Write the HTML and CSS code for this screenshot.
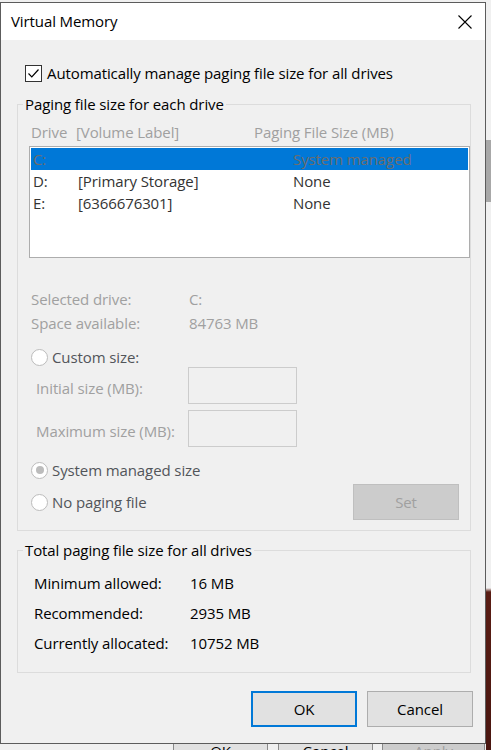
FILE: index.html
```html
<!DOCTYPE html>
<html>
<head>
<meta charset="utf-8">
<title>Virtual Memory</title>
<link rel="stylesheet" href="styles.css">
</head>
<body>
<div class="screen">
  <div class="bg-top"></div>
  <div class="dialog">
    <div class="titlebar">
      <span class="title">Virtual Memory</span>
      <svg class="close" width="14" height="14" viewBox="0 0 14 14"><path d="M0.5 0.5 L13.5 13.5 M13.5 0.5 L0.5 13.5" stroke="#000" stroke-width="1.1" fill="none"/></svg>
    </div>
    <div class="content">
      <div class="auto-row">
        <span class="checkbox"><svg width="15" height="15" viewBox="0 0 15 15"><path d="M2.5 7.5 L5.8 10.8 L12.5 3.5" stroke="#000" stroke-width="1.2" fill="none"/></svg></span>
        <span class="auto-label">Automatically manage paging file size for all drives</span>
      </div>

      <fieldset class="group group-drives">
        <legend>Paging file size for each drive</legend>
        <div class="list-head">
          <span>Drive</span><span>[Volume Label]</span><span>Paging File Size (MB)</span>
        </div>
        <div class="listbox">
          <div class="lrow selected"><span>C:</span><span></span><span>System managed</span></div>
          <div class="lrow"><span>D:</span><span>[Primary Storage]</span><span>None</span></div>
          <div class="lrow"><span>E:</span><span>[6366676301]</span><span>None</span></div>
        </div>
        <div class="info-row first"><span>Selected drive:</span><span>C:</span></div>
        <div class="info-row"><span>Space available:</span><span>84763 MB</span></div>

        <div class="radio-row custom"><span class="radio"></span><span class="radio-label">Custom size:</span></div>
        <div class="size-row"><span class="size-label">Initial size (MB):</span><span class="size-box"></span></div>
        <div class="size-row second"><span class="size-label">Maximum size (MB):</span><span class="size-box"></span></div>
        <div class="radio-row sysman"><span class="radio checked"></span><span class="radio-label">System managed size</span></div>
        <div class="radio-row nopage">
          <span class="radio"></span><span class="radio-label">No paging file</span>
          <span class="btn btn-set">Set</span>
        </div>
      </fieldset>

      <fieldset class="group group-total">
        <legend>Total paging file size for all drives</legend>
        <div class="total-row first"><span>Minimum allowed:</span><span>16 MB</span></div>
        <div class="total-row"><span>Recommended:</span><span>2935 MB</span></div>
        <div class="total-row"><span>Currently allocated:</span><span>10752 MB</span></div>
      </fieldset>

      <div class="actions">
        <span class="btn btn-ok">OK</span>
        <span class="btn btn-cancel">Cancel</span>
      </div>
    </div>
  </div>
  <div class="bg-right"></div>
  <div class="bg-bottom">
    <span class="bb-btn bb-ok">OK</span>
    <span class="bb-btn bb-cancel">Cancel</span>
    <span class="bb-btn bb-apply">Apply</span>
  </div>
</div>
</body>
</html>
```

FILE: styles.css
```css
html, body {
  margin: 0;
  padding: 0;
}
body {
  width: 491px;
  height: 750px;
  overflow: hidden;
  background: #f0f0f0;
  font-family: "Segoe UI", "Open Sans", "Noto Sans", sans-serif;
  font-size: 15px;
  letter-spacing: -0.1px;
  color: #000;
}
.screen {
  display: grid;
  grid-template-columns: 486px 5px;
  grid-template-rows: 2px 742px 6px;
  width: 491px;
  height: 750px;
  overflow: hidden;
}
.bg-top {
  grid-column: 1 / 3;
  grid-row: 1;
  background: #f0f0f0;
}
.dialog {
  grid-column: 1;
  grid-row: 2;
  box-sizing: border-box;
  border: 1px solid #5c5c5c;
  background: #f0f0f0;
  display: flex;
  flex-direction: column;
  overflow: hidden;
}
.titlebar {
  height: 37px;
  flex: none;
  background: #fff;
  display: flex;
  align-items: center;
  padding-left: 10px;
}
.title {
  font-size: 15px;
  line-height: 20px;
  margin-top: -2px;
  color: #000;
}
.close {
  margin-left: auto;
  margin-right: 13px;
}
.content {
  padding: 0 12px 0 16px;
}
.auto-row {
  margin-top: 25px;
  height: 17px;
  display: flex;
  align-items: center;
  padding-left: 8px;
}
.checkbox {
  box-sizing: border-box;
  width: 17px;
  height: 17px;
  border: 1px solid #333;
  background: #fff;
  display: flex;
  align-items: center;
  justify-content: center;
  flex: none;
}
.auto-label {
  margin-left: 5px;
  line-height: 17px;
}
.group {
  margin: 12px 2px 0 0;
  padding: 0 0 10px 0;
  border: 1px solid #dcdcdc;
  min-width: 0;
}
.group legend {
  margin-left: 5px;
  padding: 0 2px;
  line-height: 20px;
  color: #000;
}
.group-total {
  margin-top: 9px;
  padding-bottom: 19px;
}
.list-head {
  margin-top: 8px;
  height: 20px;
  line-height: 20px;
  padding-left: 13px;
  display: grid;
  grid-template-columns: 45px 178px auto;
  color: #a0a0a0;
}
.listbox {
  margin: 4px 0 0 11px;
  box-sizing: border-box;
  height: 112px;
  border: 1px solid #adadad;
  background: #fff;
  padding: 1px;
}
.lrow {
  height: 22px;
  line-height: 22px;
  padding-left: 2px;
  display: grid;
  grid-template-columns: 45px 215px auto;
  color: #333;
}
.lrow.selected {
  background: #0078d7;
  color: #6d6d6d;
}
.info-row {
  margin-top: 4px;
  line-height: 20px;
  padding-left: 13px;
  display: grid;
  grid-template-columns: 158px auto;
  color: #a0a0a0;
}
.info-row.first {
  margin-top: 31px;
}
.radio-row {
  display: flex;
  align-items: center;
  padding-left: 13px;
  height: 20px;
}
.radio-row.custom {
  margin-top: 14px;
}
.radio-row.sysman {
  margin-top: 13px;
}
.radio-row.nopage {
  margin-top: 4px;
  height: 36px;
  padding-right: 11px;
}
.radio {
  box-sizing: border-box;
  width: 17px;
  height: 17px;
  border-radius: 50%;
  border: 1px solid #bcbcbc;
  background: #fff;
  flex: none;
  display: flex;
  align-items: center;
  justify-content: center;
}
.radio.checked::after {
  content: "";
  width: 8px;
  height: 8px;
  border-radius: 50%;
  background: #bcbcbc;
}
.radio-label {
  margin-left: 4px;
  line-height: 20px;
  color: #52555a;
}
.size-row {
  display: flex;
  align-items: center;
  padding-left: 18px;
  height: 37px;
}
.size-row.second {
  margin-top: 6px;
}
.size-label {
  width: 152px;
  flex: none;
  line-height: 20px;
  margin-top: 4px;
  color: #a0a0a0;
}
.size-box {
  box-sizing: border-box;
  width: 109px;
  height: 37px;
  border: 1px solid #cccccc;
  background: #f0f0f0;
}
.btn {
  box-sizing: border-box;
  height: 36px;
  display: flex;
  align-items: center;
  justify-content: center;
  font-size: 15px;
}
.btn-set {
  margin-left: auto;
  width: 106px;
  background: #cccccc;
  border: 1px solid #bfbfbf;
  color: #a0a0a0;
}
.total-row {
  margin-top: 10px;
  line-height: 20px;
  padding-left: 16px;
  display: grid;
  grid-template-columns: 156px auto;
  color: #000;
}
.total-row.first {
  margin-top: 13px;
}
.actions {
  margin-top: 18px;
  display: flex;
  justify-content: flex-end;
  gap: 10px;
}
.btn-ok,
.btn-cancel {
  width: 106px;
  background: #e1e1e1;
  color: #000;
}
.btn-ok {
  border: 2px solid #0078d7;
}
.btn-cancel {
  border: 1px solid #adadad;
}
.bg-right {
  grid-column: 2;
  grid-row: 2;
  background: linear-gradient(to bottom, #f0f0f0 0, #f0f0f0 138px, #a8a8a8 138px, #a8a8a8 200px, #f0f0f0 200px, #f0f0f0 586px, #5a1d14 590px, #4a1610 100%);
}
.bg-bottom {
  grid-column: 1 / 3;
  grid-row: 3;
  display: flex;
  overflow: hidden;
  padding-left: 173px;
  background: linear-gradient(to right, #f0f0f0 0, #f0f0f0 486px, #4a1610 486px);
}
.bb-btn {
  box-sizing: border-box;
  height: 24px;
  line-height: 20px;
  text-align: center;
  border-left: 1px solid #8a8a8a;
  border-right: 1px solid #8a8a8a;
  background: #e1e1e1;
  color: #000;
  flex: none;
  margin-top: -3px;
  padding-top: 0;
}
.bb-ok { width: 95px; }
.bb-cancel { width: 95px; margin-left: 10px; }
.bb-apply { width: 103px; margin-left: 9px; background: #cccccc; color: #a0a0a0; }
```
